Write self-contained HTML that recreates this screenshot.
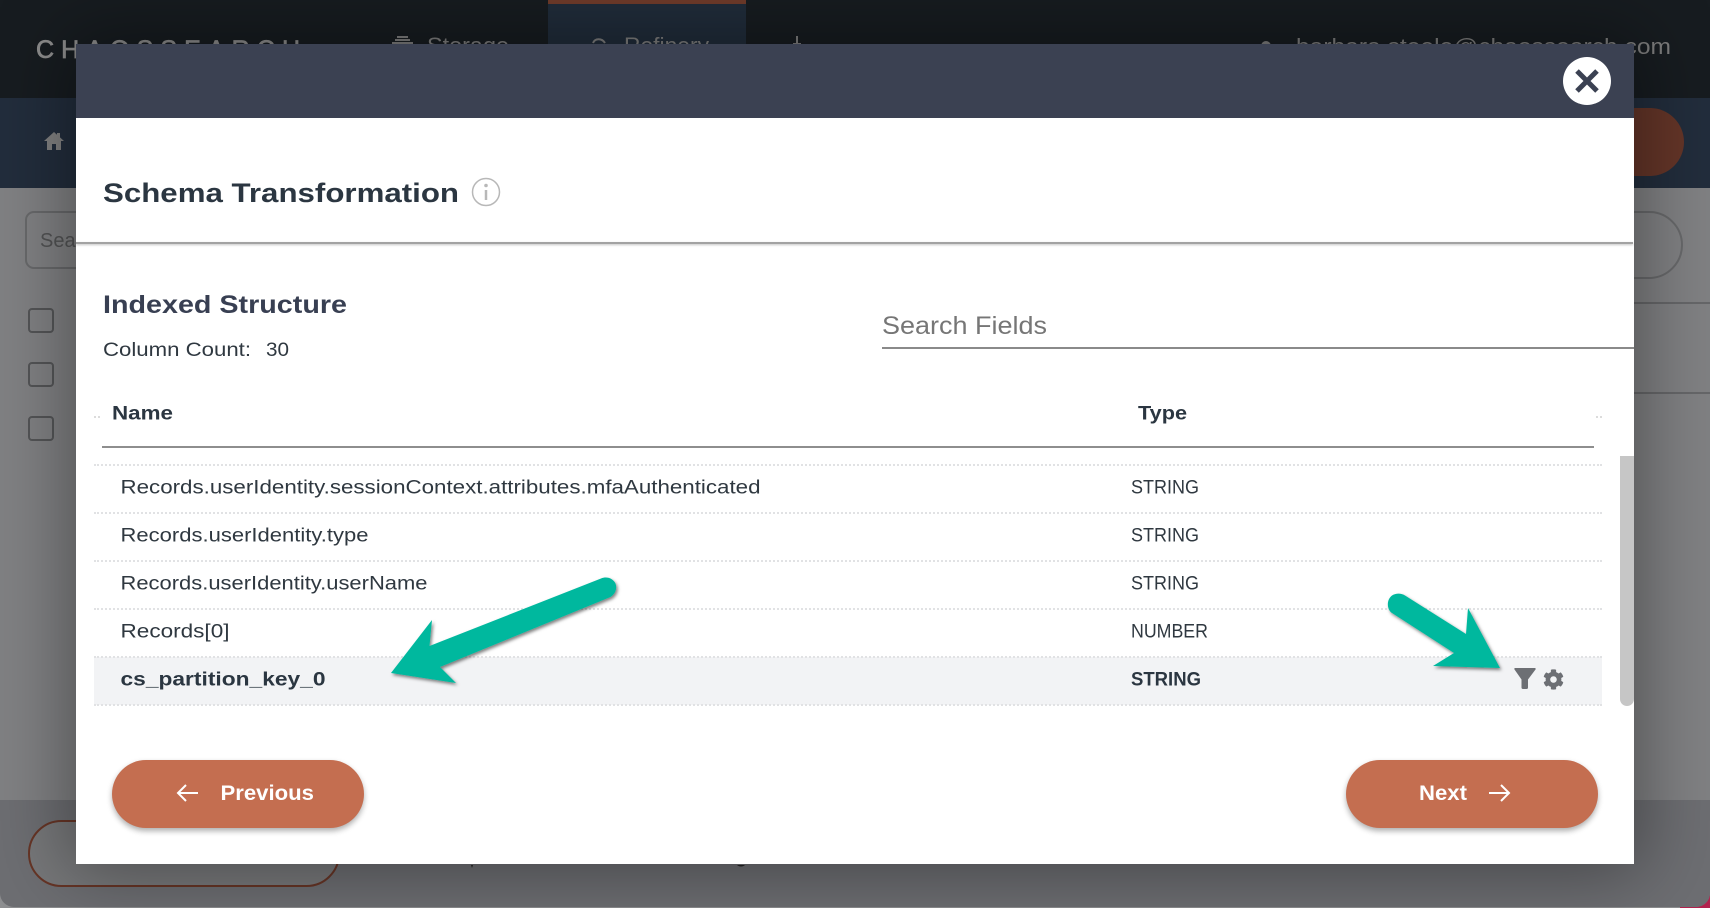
<!DOCTYPE html>
<html lang="en">
<head>
<meta charset="utf-8">
<title>Schema Transformation</title>
<style>
html,body{margin:0;padding:0;width:1710px;height:908px;overflow:hidden;background:#8d8e90;font-family:"Liberation Sans",sans-serif}
.abs{position:absolute}
#corner{left:1680px;top:878px;width:30px;height:30px;background:#b3234f}
#page{left:0;top:0;width:1710px;height:907px;border-radius:0 0 14px 14px;overflow:hidden;background:#808183}
#nav{left:0;top:0;width:1710px;height:98px;background:#171c20}
#tab{left:548px;top:0;width:198px;height:98px;background:#202c3a;border-top:4px solid #6f3b2a;box-sizing:border-box}
#sub{left:0;top:98px;width:1710px;height:90px;background:#222d3c}
#act{left:1560px;top:108px;width:124px;height:68px;border-radius:34px;background:#643528}
#s1{left:1500px;top:211px;width:183px;height:68px;border:2px solid #68696b;border-radius:34px;box-sizing:border-box}
#s0{left:25px;top:211px;width:120px;height:58px;border:2px solid #68696b;border-radius:9px;box-sizing:border-box}
.rule{left:1634px;width:76px;height:2px;background:#666769}
.cb{left:28px;width:26px;height:25px;border:2px solid #545557;border-radius:4px;box-sizing:border-box}
#foot{left:0;top:800px;width:1710px;height:107px;background:#6d6e72}
#out{left:28px;top:820px;width:312px;height:67px;border:2px solid #673526;border-radius:34px;box-sizing:border-box;background:#77787a}
#modal{left:76px;top:44px;width:1558px;height:820px;background:#fff;box-shadow:0 0 70px 8px rgba(0,0,0,.38)}
#mh{left:76px;top:44px;width:1558px;height:74px;background:#3b4152}
#div{left:76px;top:242px;width:1557px;height:2px;background:#a2a2a2;box-shadow:0 1px 2px rgba(0,0,0,.25)}
#inp{left:882px;top:347px;width:752px;height:2px;background:#8a8a8a}
#hl{left:102px;top:446px;width:1492px;height:2px;background:#8e8e8e}
#rowhl{left:94px;top:657px;width:1508px;height:48px;background:#f2f3f5}
.dot{left:94px;width:1508px;height:0;border-top:2px dotted #e1e2e4}
#sb{left:1620px;top:456px;width:14px;height:250px;background:#c6c6c6;border-radius:0 0 7px 7px}
.btn{top:760px;width:252px;height:68px;background:#c46e50;border-radius:34px;box-shadow:0 3px 6px rgba(0,0,0,.32)}
svg{position:absolute;left:0;top:0}
</style>
</head>
<body>
<div class="abs" id="corner"></div>
<div class="abs" id="page">
  <div class="abs" id="nav"></div>
  <div class="abs" id="tab"></div>
  <div class="abs" id="sub"></div>
  <div class="abs" id="act"></div>
  <div class="abs" id="s1"></div>
  <div class="abs" id="s0"></div>
  <div class="abs rule" style="top:302px"></div>
  <div class="abs rule" style="top:392px"></div>
  <div class="abs cb" style="top:308px"></div>
  <div class="abs cb" style="top:362px"></div>
  <div class="abs cb" style="top:416px"></div>
  <div class="abs" id="foot"></div>
  <div class="abs" id="out"></div>
</div>

<svg width="1710" height="908" viewBox="0 0 1710 908" font-family="'Liberation Sans',sans-serif">
  <text x="36" y="58" font-size="25" fill="#8c8c8c" stroke="#8c8c8c" stroke-width=".7" textLength="264" lengthAdjust="spacing">CHAOSSEARCH</text>
  <text x="427" y="53" font-size="22" fill="#7d7d7d" textLength="82" lengthAdjust="spacingAndGlyphs">Storage</text>
  <text x="624" y="53" font-size="22" fill="#7d7d7d" textLength="85" lengthAdjust="spacingAndGlyphs">Refinery</text>
  <text x="1296" y="54" font-size="22" fill="#7d7d7d" textLength="375" lengthAdjust="spacingAndGlyphs">barbara.steele@chaossearch.com</text>
  <g stroke="#7d7d7d" stroke-width="2" fill="none">
    <path d="M397 37h11M395 40h15M392 43h21"/>
    <path d="M593 43c2-5 9-5 12 0"/>
    <path d="M797 36v10M793 44h8"/>
  </g>
  <circle cx="1266" cy="46" r="5" fill="#7d7d7d"/>
  <path d="M54 132l-10 9h3v9h5v-6h4v6h5v-9h3l-4-3.600v-4.400h-3v1.700z" fill="#808080"/>
  <text x="40" y="247" font-size="20" fill="#525354">Search</text>
  <path d="M471 865l1 3 1-3zM737 865c2 2 6 2 8 0z" fill="#222"/>
</svg>

<div class="abs" id="modal"></div>
<div class="abs" id="mh"></div>
<div class="abs" id="div"></div>
<div class="abs" id="inp"></div>
<div class="abs" id="hl"></div>
<div class="abs" id="rowhl"></div>
<div class="abs dot" style="top:464px"></div>
<div class="abs dot" style="top:512px"></div>
<div class="abs dot" style="top:560px"></div>
<div class="abs dot" style="top:608px"></div>
<div class="abs dot" style="top:656px"></div>
<div class="abs dot" style="top:704px"></div>
<div class="abs" id="sb"></div>
<div class="abs btn" style="left:112px"></div>
<div class="abs btn" style="left:1346px"></div>

<svg width="1710" height="908" viewBox="0 0 1710 908" font-family="'Liberation Sans',sans-serif">
  <defs>
    <filter id="ds" x="-10%" y="-10%" width="125%" height="125%">
      <feDropShadow dx="1.500" dy="2" stdDeviation="1.500" flood-color="#000" flood-opacity=".5"/>
    </filter>
  </defs>

  <circle cx="1587" cy="81" r="24" fill="#fff"/>
  <path d="M1577 71l20 20M1597 71l-20 20" stroke="#3b4152" stroke-width="5" fill="none"/>

  <text x="103" y="202" font-size="27" font-weight="700" fill="#2b3641" textLength="356" lengthAdjust="spacingAndGlyphs">Schema Transformation</text>
  <circle cx="486" cy="192" r="13.500" fill="none" stroke="#b8b8b8" stroke-width="1.500"/>
  <circle cx="486" cy="185.500" r="1.800" fill="#b8b8b8"/>
  <path d="M486 190v10" stroke="#b8b8b8" stroke-width="2.500"/>

  <text x="103" y="313" font-size="25" font-weight="700" fill="#383f52" textLength="244" lengthAdjust="spacingAndGlyphs">Indexed Structure</text>
  <text x="103" y="356" font-size="19" fill="#2f3840" textLength="148" lengthAdjust="spacingAndGlyphs">Column Count:</text>
  <text x="266" y="356" font-size="19" fill="#2f3840" textLength="23" lengthAdjust="spacingAndGlyphs">30</text>
  <text x="882" y="334" font-size="25" fill="#767676" textLength="165" lengthAdjust="spacingAndGlyphs">Search Fields</text>

  <text x="112" y="419.500" font-size="19" font-weight="700" fill="#2b3641" textLength="61" lengthAdjust="spacingAndGlyphs">Name</text>
  <text x="1138" y="419.500" font-size="19" font-weight="700" fill="#2b3641" textLength="49" lengthAdjust="spacingAndGlyphs">Type</text>
  <path d="M94 417h2M98 417h2M1596 417h2M1600 417h2" stroke="#dcdcdc" stroke-width="2"/>

  <g font-size="19" fill="#2f3840">
    <text x="120.500" y="493.500" textLength="640" lengthAdjust="spacingAndGlyphs">Records.userIdentity.sessionContext.attributes.mfaAuthenticated</text>
    <text x="120.500" y="541.500" textLength="248" lengthAdjust="spacingAndGlyphs">Records.userIdentity.type</text>
    <text x="120.500" y="589.500" textLength="307" lengthAdjust="spacingAndGlyphs">Records.userIdentity.userName</text>
    <text x="120.500" y="637.500" textLength="109" lengthAdjust="spacingAndGlyphs">Records[0]</text>
    <text x="1131" y="493.500" textLength="68" lengthAdjust="spacingAndGlyphs">STRING</text>
    <text x="1131" y="541.500" textLength="68" lengthAdjust="spacingAndGlyphs">STRING</text>
    <text x="1131" y="589.500" textLength="68" lengthAdjust="spacingAndGlyphs">STRING</text>
    <text x="1131" y="637.500" textLength="77" lengthAdjust="spacingAndGlyphs">NUMBER</text>
  </g>
  <text x="120.500" y="685.500" font-size="19" font-weight="700" fill="#2b3641" textLength="205" lengthAdjust="spacingAndGlyphs">cs_partition_key_0</text>
  <text x="1131" y="685.500" font-size="19" font-weight="700" fill="#2b3641" textLength="70" lengthAdjust="spacingAndGlyphs">STRING</text>

  <path d="M1514.500 669.500c-.6-1 0-1.500 1-1.500h19c1 0 1.600.6 1 1.500l-7.500 10v8c0 1-.5 1.500-1.500 1.500h-3.500c-1 0-1.500-.5-1.500-1.500v-8z" fill="#6d6f74"/>
  <g transform="translate(1543 669) scale(.041)" fill="#6d6f74">
    <path d="M487.400 315.700l-42.600-24.600c4.300-23.200 4.300-47 0-70.200l42.600-24.600c4.900-2.800 7.100-8.600 5.500-14-11.100-35.600-30-67.800-54.700-94.600-3.800-4.100-10-5.100-14.800-2.300L380.800 110c-17.900-15.400-38.500-27.300-60.800-35.100V25.800c0-5.600-3.900-10.500-9.400-11.700-36.700-8.200-74.300-7.800-109.200 0-5.500 1.200-9.400 6.100-9.400 11.700V75c-22.200 7.900-42.800 19.800-60.800 35.100L88.700 85.500c-4.900-2.800-11-1.900-14.800 2.300-24.700 26.700-43.600 58.900-54.700 94.600-1.700 5.400.6 11.200 5.500 14L67.300 221c-4.300 23.200-4.300 47 0 70.200l-42.600 24.600c-4.900 2.800-7.100 8.600-5.500 14 11.100 35.600 30 67.800 54.700 94.600 3.800 4.100 10 5.100 14.800 2.300l42.600-24.600c17.900 15.400 38.500 27.300 60.800 35.100v49.200c0 5.600 3.900 10.500 9.400 11.700 36.700 8.200 74.300 7.800 109.200 0 5.500-1.200 9.400-6.100 9.400-11.700v-49.200c22.200-7.900 42.800-19.800 60.800-35.100l42.600 24.600c4.900 2.800 11 1.900 14.800-2.300 24.700-26.700 43.600-58.900 54.700-94.600 1.500-5.500-.7-11.300-5.600-14.100zM256 336c-44.100 0-80-35.900-80-80s35.900-80 80-80 80 35.900 80 80-35.900 80-80 80z"/>
  </g>

  <g fill="#03b89e" filter="url(#ds)">
    <path d="M601 578.500c6-2.500 12 0 14.500 5 2 5-.5 11-5 13.500L440 667l16 16-65-10 41-53-2.500 26z"/>
    <path d="M1392 595.500c4-2.500 9-2.500 13 0l61 38.500 2-26 32 60-67-2 21-13-62-40c-5-3-6-13 0-17.500z"/>
  </g>

  <path d="M198 793h-19M186 785l-8 8 8 8" fill="none" stroke="#fff" stroke-width="2"/>
  <text x="220.500" y="800" font-size="21" font-weight="700" fill="#fff" textLength="93.500" lengthAdjust="spacingAndGlyphs">Previous</text>
  <text x="1419" y="800" font-size="21" font-weight="700" fill="#fff" textLength="48" lengthAdjust="spacingAndGlyphs">Next</text>
  <path d="M1489 793h20M1501 785l8 8-8 8" fill="none" stroke="#fff" stroke-width="2"/>
</svg>
</body>
</html>
